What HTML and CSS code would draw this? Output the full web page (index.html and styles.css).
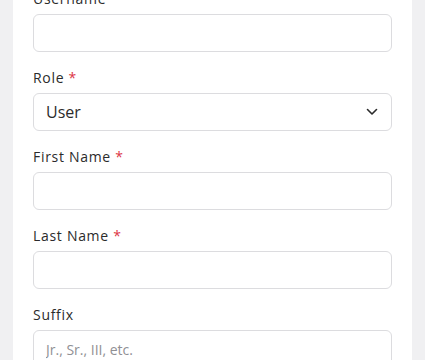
FILE: index.html
```html
<!DOCTYPE html>
<html lang="en">
<head>
    <meta charset="UTF-8">
    <meta name="viewport" content="width=device-width, initial-scale=1.0">
    <title>New User</title>
    <link rel="stylesheet" href="styles.css">
</head>
<body>
    <div class="card">
        <div class="form-group">
            <label class="form-label">Username <span class="req">*</span></label>
            <input class="form-input" type="text">
        </div>

        <div class="form-group">
            <label class="form-label">Role <span class="req">*</span></label>
            <div class="select-wrap">
                <select class="form-input form-select">
                    <option>User</option>
                    <option>Admin</option>
                </select>
                <svg class="chevron" width="12" height="8" viewBox="0 0 12 8">
                    <path d="M1.5 1.5 L6 6 L10.5 1.5" fill="none" stroke="#2b2b2b" stroke-width="1.6" stroke-linecap="round" stroke-linejoin="round"/>
                </svg>
            </div>
        </div>

        <div class="form-group">
            <label class="form-label">First Name <span class="req">*</span></label>
            <input class="form-input" type="text">
        </div>

        <div class="form-group">
            <label class="form-label">Last Name <span class="req">*</span></label>
            <input class="form-input" type="text">
        </div>

        <div class="form-group">
            <label class="form-label">Suffix</label>
            <input class="form-input" type="text" placeholder="Jr., Sr., III, etc.">
        </div>
    </div>
</body>
</html>
```

FILE: styles.css
```css
body {
    font-family: "Open Sans", Arial, sans-serif;
    margin: 0;
    padding: 0 13px;
    background-color: #f0f0f2;
    color: #2b2b2b;
}
.card {
    background-color: white;
    margin-top: -11px;
    padding: 0 20px 20px;
    min-height: 400px;
}
.form-group {
    margin-bottom: 16px;
}
.form-label {
    display: block;
    font-size: 14px;
    line-height: 20px;
    letter-spacing: 0.7px;
    margin-bottom: 5px;
    color: #2b2b2b;
}
.req {
    color: #dc3545;
}
.form-input {
    display: block;
    box-sizing: border-box;
    width: 100%;
    height: 38px;
    padding: 0 12px;
    border: 1px solid #dcdcdf;
    border-radius: 6px;
    background-color: white;
    font-family: inherit;
    font-size: 16px;
    color: #2b2b2b;
}
.form-input::placeholder {
    color: #909094;
    font-size: 14px;
}
.select-wrap {
    position: relative;
}
.form-select {
    appearance: none;
    -webkit-appearance: none;
}
.chevron {
    position: absolute;
    right: 14px;
    top: 15px;
    pointer-events: none;
}
```
